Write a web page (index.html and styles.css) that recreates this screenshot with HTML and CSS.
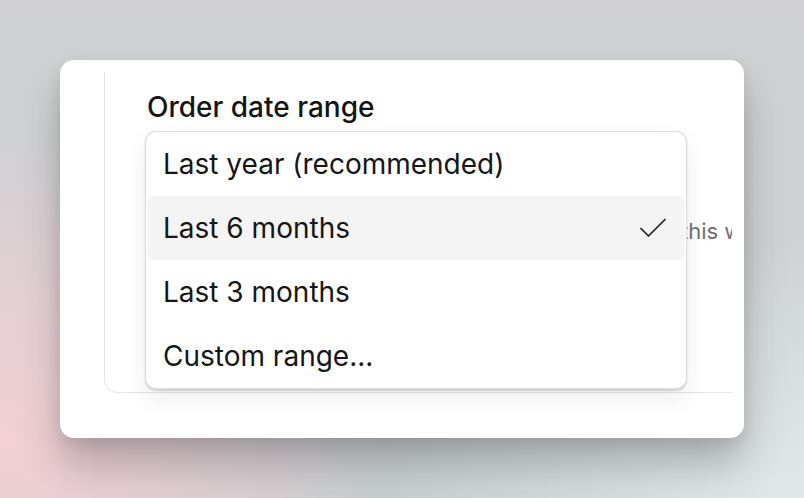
FILE: index.html
```html
<!DOCTYPE html>
<html lang="en">
<head>
<meta charset="utf-8">
<title>Order date range</title>
<link rel="stylesheet" href="styles.css">
</head>
<body>
<div class="stage">
  <div class="card">
    <div class="clip">
      <div class="panel">
        <div class="field">
          <div class="label">Order date range</div>
          <div class="control">
            <div class="trigger"></div>
            <p class="helper">Orders placed outside this window are not included.</p>
            <div class="menu" role="listbox">
              <div class="item" role="option">Last year (recommended)</div>
              <div class="item selected" role="option" aria-selected="true">
                <span>Last 6 months</span>
                <svg class="check" width="28" height="24" viewBox="0 0 28 24" fill="none" stroke="#1f1f1f" stroke-width="1.7" stroke-linecap="round" stroke-linejoin="round"><path d="M2 11.5 L9.5 19 L26 2.5"/></svg>
              </div>
              <div class="item" role="option">Last 3 months</div>
              <div class="item" role="option">Custom range...</div>
            </div>
          </div>
        </div>
      </div>
    </div>
  </div>
</div>
</body>
</html>
```

FILE: styles.css
```css
* { box-sizing: border-box; }
html, body { margin: 0; padding: 0; }
body {
  width: 804px;
  height: 498px;
  overflow: hidden;
  font-family: Inter, "Noto Sans", "Liberation Sans", sans-serif;
  background:
    radial-gradient(ellipse 380px 300px at 0% 88%, rgba(243,208,213,1) 0%, rgba(243,208,213,0.6) 45%, rgba(243,208,213,0) 100%),
    radial-gradient(ellipse 420px 260px at 100% 100%, rgba(226,234,233,1) 0%, rgba(226,234,233,0) 100%),
    linear-gradient(180deg, #d1d1d3 0%, #cfd2d4 60%, #c9cfd0 100%);
}
.stage {
  padding: 60px;
}
.card {
  width: 684px;
  height: 378px;
  background: #ffffff;
  border-radius: 14px;
  padding: 12px;
  box-shadow: 0 26px 40px rgba(40, 40, 45, 0.28), 0 6px 14px rgba(0, 0, 0, 0.08);
}
.clip {
  width: 660px;
  height: 354px;
  overflow: hidden;
}
.panel {
  margin-top: -12px;
  margin-left: 32px;
  width: 720px;
  border: 1px solid #e4e4e4;
  border-top: none;
  border-right: none;
  border-bottom-left-radius: 14px;
  padding: 30px 0 146px 40px;
}
.field {
  display: flex;
  flex-direction: column;
}
.label {
  padding-left: 2px;
  font-size: 28px;
  line-height: 34px;
  font-weight: 500;
  color: #141414;
  margin-bottom: 7px;
}
.control {
  position: relative;
}
.trigger {
  width: 542px;
  height: 52px;
  border: 1px solid #e0e0e0;
  border-radius: 10px;
}
.helper {
  margin: 34px 0 0 0;
  padding-left: 300px;
  white-space: nowrap;
  font-size: 22px;
  line-height: 29px;
  color: #707070;
}
.menu {
  position: absolute;
  top: 0;
  left: 0;
  width: 542px;
  background: #ffffff;
  border: 1px solid #dedede;
  border-radius: 11px;
  padding: 0 1px;
  box-shadow: 0 2px 2px rgba(0, 0, 0, 0.14), 0 10px 24px rgba(0, 0, 0, 0.07);
  display: flex;
  flex-direction: column;
}
.item {
  height: 64px;
  display: flex;
  align-items: center;
  justify-content: space-between;
  padding: 0 18px 0 16px;
  font-size: 28px;
  color: #161616;
  border-radius: 9px;
}
.item.selected {
  background: #f4f4f4;
}
.check {
  display: block;
  margin-top: 2px;
}
```
